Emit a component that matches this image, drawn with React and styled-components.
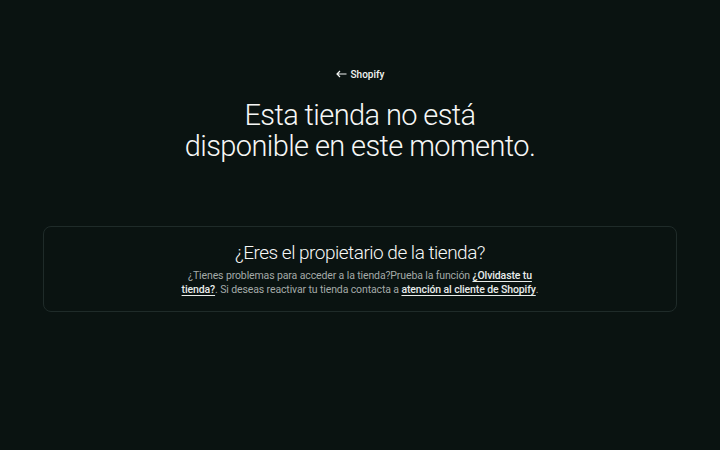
import React from "react";
import styled, { createGlobalStyle } from "styled-components";

const Global = createGlobalStyle`
  html, body { margin: 0; padding: 0; background: #0a1311; }
  body { font-family: Roboto, "Noto Sans", sans-serif; color: #f2f4f3; }
`;

const Page = styled.main`
  min-height: 450px;
  box-sizing: border-box;
  padding: 66px 43px 0;
  display: flex;
  flex-direction: column;
  align-items: center;
`;

const BackLink = styled.a`
  display: flex;
  align-items: center;
  gap: 4px;
  font-size: 10px;
  font-weight: 500;
  color: #f2f4f3;
  text-decoration: none;
  height: 16px;
`;

const Headline = styled.h1`
  margin: 18px 0 0;
  font-size: 29px;
  font-weight: 300;
  line-height: 31px;
  letter-spacing: -0.6px;
  text-align: center;
  color: #f6f7f6;
`;

const Card = styled.section`
  align-self: stretch;
  margin-top: 64px;
  border: 1px solid #1f2b29;
  border-radius: 8px;
  padding: 13px 20px 14px;
  text-align: center;
`;

const CardTitle = styled.h2`
  margin: 0;
  font-size: 19px;
  font-weight: 300;
  line-height: 26px;
  letter-spacing: -0.5px;
  color: #f6f7f6;
`;

const CardText = styled.p`
  margin: 3px auto 0;
  max-width: 362px;
  font-size: 10.5px;
  line-height: 14px;
  letter-spacing: -0.12px;
  color: #a4aaa8;
`;

const TextLink = styled.a`
  color: #e8ecea;
  font-weight: 500;
  text-decoration: underline;
  text-decoration-thickness: 1px;
  text-underline-offset: 2px;
`;

export default function App() {
  return (
    <>
      <Global />
      <Page>
        <BackLink href="#">
          <svg width="11" height="8" viewBox="0 0 11 8" fill="none" stroke="#f2f4f3" strokeWidth="1.2">
            <path d="M10.5 4H1M4 1L1 4l3 3" />
          </svg>
          Shopify
        </BackLink>
        <Headline>
          Esta tienda no está
          <br />
          disponible en este momento.
        </Headline>
        <Card>
          <CardTitle>¿Eres el propietario de la tienda?</CardTitle>
          <CardText>
            ¿Tienes problemas para acceder a la tienda?Prueba la función{" "}
            <TextLink href="#">¿Olvidaste tu tienda?</TextLink>. Si deseas reactivar tu tienda contacta a{" "}
            <TextLink href="#">atención al cliente de Shopify</TextLink>.
          </CardText>
        </Card>
      </Page>
    </>
  );
}
